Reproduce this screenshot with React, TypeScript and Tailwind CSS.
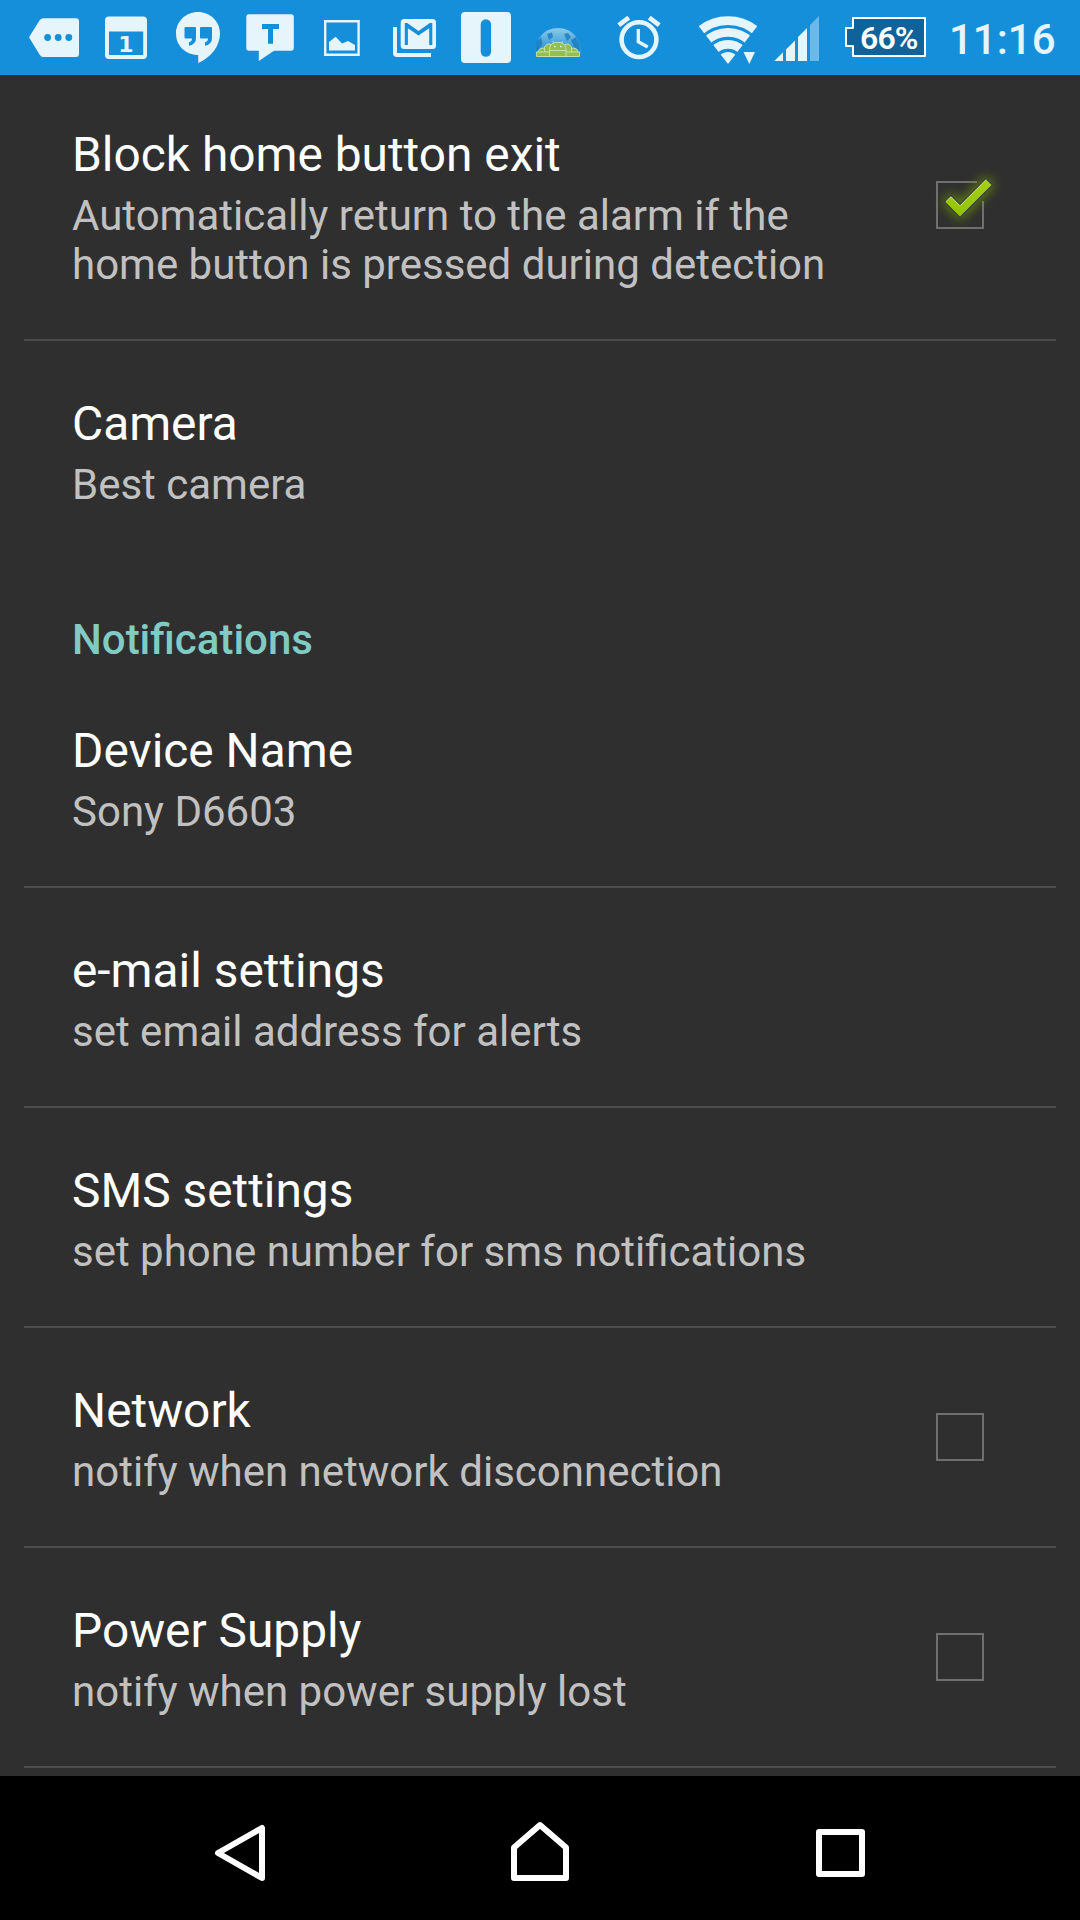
import type { ReactNode } from "react";

type Item = {
  title: string;
  summary: string;
  checkbox?: boolean;
  checked?: boolean;
  last?: boolean;
};

const general: Item[] = [
  {
    title: "Block home button exit",
    summary: "Automatically return to the alarm if the home button is pressed during detection",
    checkbox: true,
    checked: true,
  },
  { title: "Camera", summary: "Best camera", last: true },
];

const notifications: Item[] = [
  { title: "Device Name", summary: "Sony D6603" },
  { title: "e-mail settings", summary: "set email address for alerts" },
  { title: "SMS settings", summary: "set phone number for sms notifications" },
  { title: "Network", summary: "notify when network disconnection", checkbox: true },
  { title: "Power Supply", summary: "notify when power supply lost", checkbox: true },
];

function StatusIcons() {
  return (
    <div className="flex items-start text-[#e6f4fc]">
      {/* more notifications */}
      <svg className="ml-[29px] h-[75px] w-[50px]" viewBox="29 0 50 75" fill="currentColor">
        <path d="M29 37.3 L39.5 20.5 Q41 18.2 43.5 18.2 H76 Q79 18.2 79 21.2 V54 Q79 57 76 57 H43.5 Q41 57 39.5 54.5 Z" />
        <g fill="#168fda">
          <circle cx="47.6" cy="37.5" r="3.4" />
          <circle cx="58.2" cy="37.5" r="3.4" />
          <circle cx="68.8" cy="37.5" r="3.4" />
        </g>
      </svg>
      {/* calendar */}
      <svg className="ml-[26px] h-[75px] w-[42px]" viewBox="105 0 42 75" fill="currentColor">
        <path
          fillRule="evenodd"
          d="M109 16.5 H143 Q147 16.5 147 20.5 V55 Q147 59 143 59 H109 Q105 59 105 55 V20.5 Q105 16.5 109 16.5 Z M109 31.5 V55 H143.2 V31.5 Z"
        />
        <text x="126" y="51.7" textAnchor="middle" className="font-['DejaVu_Sans'] text-[22px] font-bold">
          1
        </text>
      </svg>
      {/* hangouts */}
      <svg className="ml-[29px] h-[75px] w-[44px]" viewBox="176 0 44 75" fill="currentColor">
        <path d="M198 12 C210.2 12 220 21.5 220 33.5 C220 46 211 57.5 198.2 63 V55 C186 55 176 46 176 33.5 C176 21.5 185.8 12 198 12 Z" />
        <path
          fill="#168fda"
          d="M185.500 27 H195 Q196 27 196 28 V38 Q196 44.500 189 45.800 V42.300 Q192 41.500 192 38.500 H185.500 Q184.500 38.500 184.500 37.500 V28 Q184.500 27 185.500 27 Z M201 27 H211 Q212 27 212 28 V38 Q212 44.500 205 45.800 V42.300 Q208 41.500 208 38.500 H201 Q200 38.500 200 37.500 V28 Q200 27 201 27 Z"
        />
      </svg>
      {/* text message */}
      <svg className="ml-[26px] h-[75px] w-[48px]" viewBox="246 0 48 75" fill="currentColor">
        <path d="M249 14.3 H291 Q293.8 14.3 293.8 17 V48 Q293.8 50.8 291 50.8 H274 L258.8 61 V50.8 H249 Q246.3 50.8 246.3 48 V17 Q246.3 14.3 249 14.3 Z" />
        <path d="M262 26.5 H279 M270.5 26 V43.8" stroke="#168fda" strokeWidth="5" fill="none" />
      </svg>
      {/* picture */}
      <svg className="ml-[30px] h-[75px] w-[36px]" viewBox="324 0 36 75" fill="currentColor">
        <path d="M325.200 21.200 H358.600 V54.800 H325.200 Z" fill="none" stroke="currentColor" strokeWidth="2.400" />
        <path d="M329 50.500 V42 L335.700 36.800 L342 43.500 L348 41 L355 45 V50.500 Z" />
      </svg>
      {/* gmail */}
      <svg className="ml-[33px] h-[75px] w-[43px]" viewBox="393 0 43 75" fill="currentColor">
        <path d="M395 27 V53 Q395 55 397 55 H431" fill="none" stroke="currentColor" strokeWidth="4" />
        <rect x="400.700" y="19" width="35.300" height="30" rx="3.500" />
        <path
          d="M404.800 23 H407.200 L418.500 31 L429.800 23 H432.300 V45 H429.200 V28.200 L418.500 35.500 L407.900 28.200 V45 H404.800 Z"
          fill="#168fda"
        />
      </svg>
      {/* pill badge */}
      <svg className="ml-[25px] h-[75px] w-[50px]" viewBox="461 0 50 75" fill="currentColor">
        <rect x="461" y="12" width="50" height="51" rx="4" />
        <rect x="480.700" y="19.300" width="10.400" height="37.400" rx="5.200" fill="#168fda" />
      </svg>
      {/* androids in front of a globe */}
      <svg className="ml-[23px] h-[75px] w-[48px]" viewBox="534 0 48 75">
        <defs>
          <linearGradient id="globe" x1="0" y1="0" x2="0" y2="1">
            <stop offset="0" stopColor="#8ccaea" />
            <stop offset="0.500" stopColor="#4ba7dc" />
            <stop offset="1" stopColor="#2088cc" />
          </linearGradient>
        </defs>
        <path d="M535 57 C534 39 544 28 558 28 C572 28 582 39 581 57 Z" fill="url(#globe)" />
        <path
          d="M535.500 52 L536.500 42 L541 37 L542.500 44 L538 50 Z M571 40 L576 37 L579 43 L580 50 L574 47 Z M547 34 L552 32.500 L553 37 L549 40 Z M564 34 L568 33 L571 37 L567 41 Z"
          fill="#1478bd"
          opacity="0.75"
        />
        <g fill="#93bf4e" stroke="#d3e8bb" strokeWidth="0.800">
          <path d="M538.500 56 V51 Q539.500 48 543 48 Q547 48 547.500 51 V56 Z M568.500 56 V51 Q569.500 48 573 48 Q577 48 577.500 51 V56 Z" />
          <path d="M544.500 56 V47 Q546 43.500 550 44 L553 47 V56 Z M563 56 V47 L566 44 Q570 43.500 571.500 47 V56 Z" />
          <path d="M536.500 56.500 V52 H579.500 V56.500 Z" />
          <path d="M549.500 56.500 V49 Q550 42.300 557.700 42.300 Q565.500 42.300 566 49 V56.500 Z" />
          <path d="M549.500 50.500 H566 M552.500 41 L554 43.500 M563 41 L561.500 43.500" />
        </g>
        <path d="M554 46.500 H555.500 M560 46.500 H561.500" stroke="#e9f5dd" strokeWidth="1.500" />
      </svg>
      {/* alarm */}
      <svg className="ml-[35px] h-[75px] w-[44px]" viewBox="617 0 44 75" fill="none" stroke="currentColor">
        <circle cx="639" cy="39.600" r="17.400" strokeWidth="4.600" />
        <path d="M638.300 29 V41.800 L647.700 47" strokeWidth="3.300" />
        <path d="M618.800 25.200 L628.800 17.600 M649.200 17.600 L659.200 25.200" strokeWidth="4.600" />
      </svg>
    </div>
  );
}

function Battery() {
  return (
    <div className="relative ml-[26px] mt-[17px] h-10 w-[81px]">
      <svg className="absolute inset-0" width="81" height="40" viewBox="0 0 81 40">
        <path d="M8 1 H80 V39 H8 V29 H1 V11 H8 Z" fill="#0f639a" stroke="#fff" strokeWidth="2" strokeLinejoin="round" />
      </svg>
      <span className="absolute left-[15px] top-px text-[32px] font-semibold leading-[40px] tracking-[-0.9px] text-white">
        66%
      </span>
    </div>
  );
}

function StatusBar() {
  return (
    <header className="relative z-10 flex h-[75px] shrink-0 items-start bg-[#168fda]">
      <StatusIcons />
      {/* wifi, rings around the tip clipped to a fan */}
      <svg className="ml-[38px] h-[75px] w-[58px] text-[#e6f4fc]" viewBox="699 0 58 75" fill="none" stroke="currentColor">
        <defs>
          <clipPath id="fan">
            <path d="M728 64 L694 20 V0 H762 V20 Z" />
          </clipPath>
        </defs>
        <g clipPath="url(#fan)" strokeWidth="8.800">
          <circle cx="728" cy="64" r="43.400" />
          <circle cx="728" cy="64" r="31.600" />
          <circle cx="728" cy="64" r="19.600" />
          <circle cx="728" cy="64" r="6" strokeWidth="12" />
        </g>
        <path d="M743.500 52 H755 L749.300 64 Z" fill="currentColor" stroke="none" />
      </svg>
      <svg className="ml-[17px] h-[75px] w-[45px] text-[#e6f4fc]" viewBox="774 0 45 75" fill="currentColor">
        <path d="M774.300 61 L783 52.300 V61 Z M786 61 V49.500 L795 40.500 V61 Z M798 61 V37 L807 28 V61 Z" />
        <path d="M810 61 V25 L819 16 V61 Z" fill="#6eb8e8" />
      </svg>
      <Battery />
      <span className="ml-[23px] mt-4 text-[42px] font-medium leading-[48px] text-[#e6f4fc]">11:16</span>
    </header>
  );
}

function Checkbox({ checked }: { checked?: boolean }) {
  if (!checked) return <div className="size-12 shrink-0 border-2 border-[#6f6f6f]" />;
  return (
    <svg className="mb-px size-12 shrink-0 overflow-visible" viewBox="0 0 48 48">
      <defs>
        <filter id="glow" x="-50%" y="-50%" width="200%" height="200%">
          <feGaussianBlur stdDeviation="6" />
        </filter>
        <linearGradient id="tick" x1="0" y1="0" x2="0" y2="1">
          <stop offset="0" stopColor="#a5cf17" />
          <stop offset="1" stopColor="#93c400" />
        </linearGradient>
      </defs>
      <path d="M41 1 H1 V47 H47 V20" fill="none" stroke="#6f6f6f" strokeWidth="2" />
      <path d="M6 21 L15 12 L24 21 L50 -5 L59 4 L24 39 Z" fill="#7ba800" opacity="0.7" filter="url(#glow)" />
      <path d="M8.500 21 L15 14.500 L24 23.500 L50 -2.500 L56.500 4 L24 36.500 Z" fill="url(#tick)" stroke="#3a4044" strokeWidth="1.300" />
      <path d="M10 20.500 L15 15.800 L24 24.800 L50 -1.200" fill="none" stroke="#c4dd76" strokeWidth="1" />
    </svg>
  );
}

function Row({ item }: { item: Item }) {
  return (
    <>
      <div className="mx-6 flex items-center pl-12 pr-[72px]">
        <div className="flex-1 pb-[50px] pt-[55px]">
          <h2 className="text-[47.85px] leading-[56px] text-white">{item.title}</h2>
          <p className="mt-2 max-w-[800px] text-[42px] leading-[49px] text-[#c1c1c1]">{item.summary}</p>
        </div>
        {item.checkbox && <Checkbox checked={item.checked} />}
      </div>
      {!item.last && <div className="mx-6 h-0.5 bg-[#4c4c4c]" />}
    </>
  );
}

function NavButton({ children }: { children: ReactNode }) {
  return (
    <button className="flex h-full w-[300px] items-center justify-center">
      <svg width="66" height="66" viewBox="0 0 66 66" fill="none" stroke="#fff" strokeWidth="6" strokeLinejoin="round">
        {children}
      </svg>
    </button>
  );
}

export default function App() {
  return (
    <div className="flex h-[1920px] w-[1080px] flex-col overflow-hidden bg-[#2f2f2f] font-[Roboto,sans-serif]">
      <StatusBar />
      <main className="-mt-[3px] flex-1">
        {general.map((item) => (
          <Row key={item.title} item={item} />
        ))}
        <h3 className="px-[72px] pb-1 pt-14 text-[42px] font-medium leading-[49px] text-[#80cbc4]">Notifications</h3>
        {notifications.map((item) => (
          <Row key={item.title} item={item} />
        ))}
      </main>
      <nav className="flex h-36 shrink-0 items-center justify-center bg-black">
        <NavButton>
          <path d="M55 13 V63 L11 38 Z" />
        </NavButton>
        <NavButton>
          <path d="M7 63 V32.5 L33 10 L59 32.5 V63 Z" />
        </NavButton>
        <NavButton>
          <path d="M12 17 H55 V59 H12 Z" />
        </NavButton>
      </nav>
    </div>
  );
}
